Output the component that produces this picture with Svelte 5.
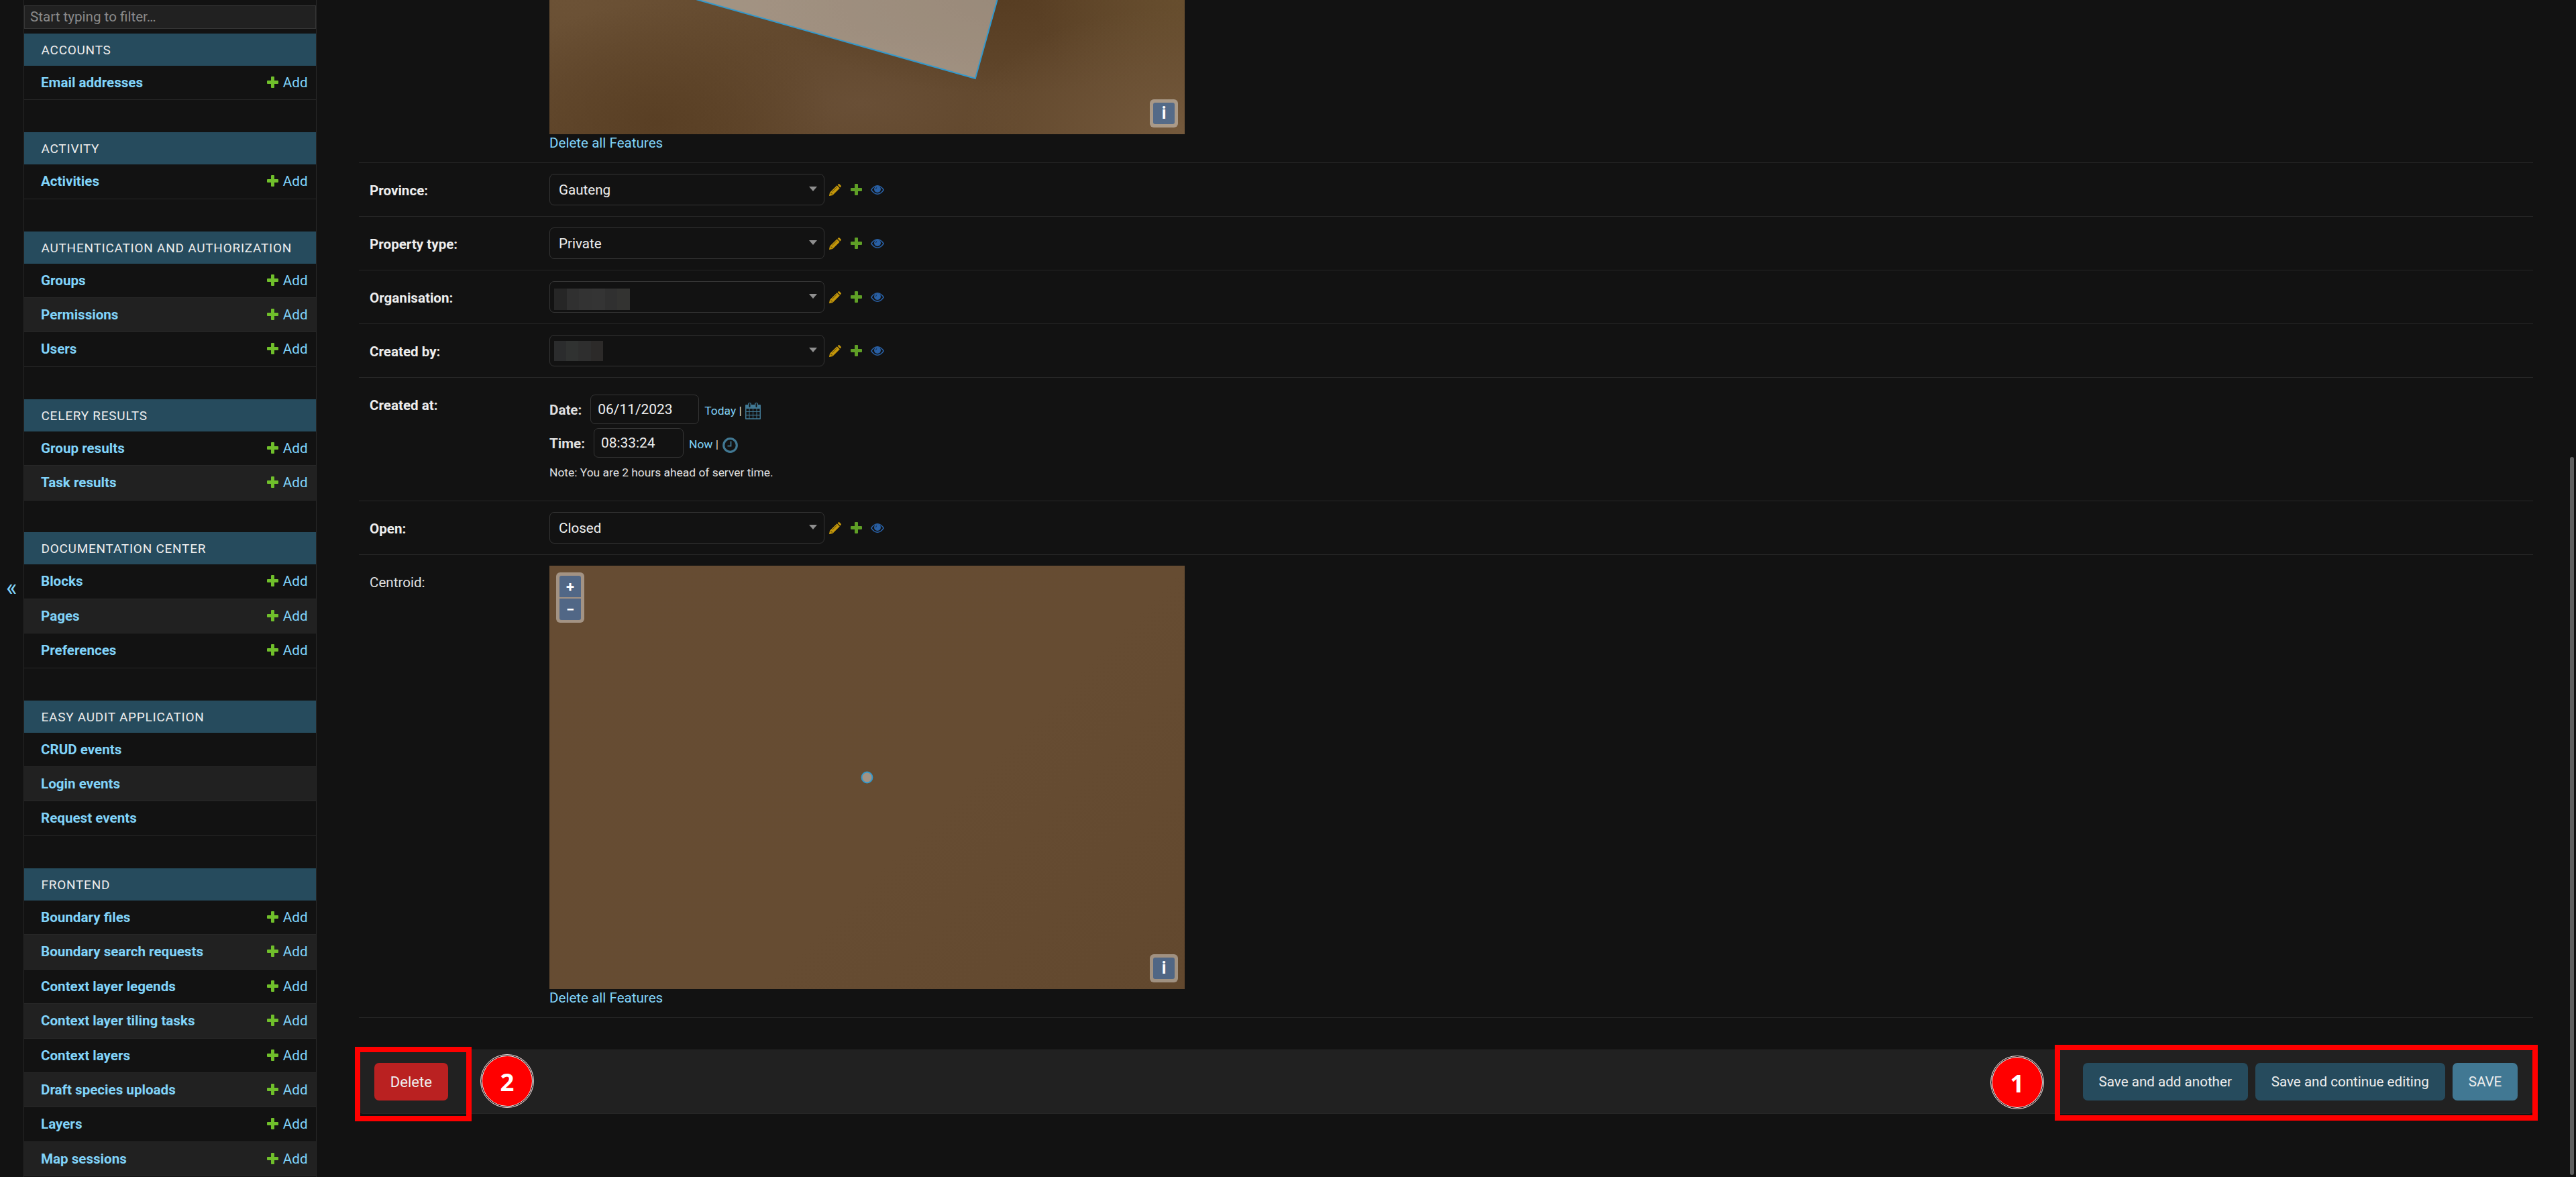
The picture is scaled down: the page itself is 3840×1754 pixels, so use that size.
<script>
  const groups = [
    { name: 'Accounts', models: ['Email addresses'] },
    { name: 'Activity', models: ['Activities'] },
    { name: 'Authentication and Authorization', models: ['Groups', 'Permissions', 'Users'] },
    { name: 'Celery Results', models: ['Group results', 'Task results'] },
    { name: 'Documentation Center', models: ['Blocks', 'Pages', 'Preferences'] },
    { name: 'Easy Audit Application', models: ['CRUD events', 'Login events', 'Request events'], readonly: true },
    {
      name: 'Frontend',
      models: [
        'Boundary files',
        'Boundary search requests',
        'Context layer legends',
        'Context layer tiling tasks',
        'Context layers',
        'Draft species uploads',
        'Layers',
        'Map sessions'
      ]
    }
  ];
</script>

{#snippet plus(cls)}
  <svg class={cls} viewBox="0 0 17 17" aria-hidden="true">
    <path d="M7 0h3q1 0 1 1v5h5q1 0 1 1v3q0 1-1 1h-5v5q0 1-1 1H7q-1 0-1-1v-5H1q-1 0-1-1V7q0-1 1-1h5V1q0-1 1-1z" />
  </svg>
{/snippet}

{#snippet related()}
  <div class="related">
    <svg class="pencil" viewBox="0 0 18 18" aria-hidden="true">
      <path d="M12.6 1.4L14 .3q.6-.5 1.200 0l2.500 2.500q.6.700 0 1.300l-1.300 1.400zM11.700 2.200l4.100 4.200L5.200 17l-5 .9q-.3 0-.2-.4L1 12.800z" />
      <path class="cut" d="M4.500 11.800l7.200-7.200M1.900 13.900l2.200.4.2 2" />
    </svg>
    {@render plus('plus')}
    <svg class="eye" viewBox="0 0 20 14" aria-hidden="true">
      <path class="lid" d="M.8 7Q5 .8 10 .8T19.200 7Q15 13.200 10 13.200T.8 7z" />
      <circle cx="10" cy="6" r="5" />
      <path class="glint" d="M7.600 6Q7.700 3.900 9.200 3.400" />
    </svg>
  </div>
{/snippet}

{#snippet selectRow(label, value, mask)}
  <div class="row">
    <div class="label strong">{label}</div>
    <div class="select">
      {#if mask}
        <span class="mask {mask}"></span>
      {:else}
        <span>{value}</span>
      {/if}
      <svg class="caret" viewBox="0 0 12 7" aria-hidden="true"><path d="M0 0h12L6 7z" /></svg>
    </div>
    {@render related()}
  </div>
{/snippet}

<div class="page">
  <div class="toggle">«</div>

  <nav>
    <div class="filter">Start typing to filter…</div>
    {#each groups as group}
      <section>
        <h2>{group.name}</h2>
        {#each group.models as model, i}
          <div class="model" class:alt={i % 2 === 1}>
            <a>{model}</a>
            {#if !group.readonly}
              <span class="add">{@render plus('addicon')}Add</span>
            {/if}
          </div>
        {/each}
      </section>
    {/each}
  </nav>

  <main>
    <div class="row first">
      <div class="label"></div>
      <div>
        <div class="map top">
          <svg class="feature" viewBox="0 0 947 200" aria-hidden="true">
            <path d="M222 0L634.800 117L667.500 0V-20H150z" />
          </svg>
          <div class="control info"><b>i</b></div>
        </div>
        <a class="clear">Delete all Features</a>
      </div>
    </div>

    {@render selectRow('Province:', 'Gauteng')}
    {@render selectRow('Property type:', 'Private')}
    {@render selectRow('Organisation:', '', 'org')}
    {@render selectRow('Created by:', '', 'user')}

    <div class="row datetime">
      <div class="label strong">Created at:</div>
      <div class="stack">
        <div class="line">
          <span class="sub">Date:</span>
          <span class="input date">06/11/2023</span>
          <span class="short"><a>Today</a>&nbsp;|</span>
          <svg class="calendar" viewBox="0 0 23 25" aria-hidden="true">
            <path fill-rule="evenodd" d="M1 3h3V2q0-2 2.500-2T9 2v1h5V2q0-2 2.500-2T19 2v1h3q1 0 1 1v20q0 1-1 1H1q-1 0-1-1V4q0-1 1-1zM5.500 2v4q0 1 1 1t1-1V2q0-1-1-1t-1 1zM15.500 2v4q0 1 1 1t1-1V2q0-1-1-1t-1 1zM1.500 9v4h4V9zM6.500 9v4h4.500V9zM12 9v4h4.500V9zM17.500 9v4h4V9zM1.500 14v4h4v-4zM6.500 14v4h4.500v-4zM12 14v4h4.500v-4zM17.500 14v4h4v-4zM1.500 19.200v4h4v-4zM6.500 19.200v4h4.500v-4zM12 19.200v4h4.500v-4zM17.500 19.200v4h4v-4z" />
          </svg>
        </div>
        <div class="line">
          <span class="sub">Time:</span>
          <span class="input time">08:33:24</span>
          <span class="short"><a>Now</a>&nbsp;|</span>
          <svg class="clock" viewBox="0 0 23 23" aria-hidden="true">
            <circle cx="11.500" cy="11.500" r="9.800" />
            <path d="M12.500 5.500v7.200H7.500" />
          </svg>
        </div>
        <p>Note: You are 2 hours ahead of server time.</p>
      </div>
    </div>

    {@render selectRow('Open:', 'Closed')}

    <div class="row centroid">
      <div class="label">Centroid:</div>
      <div>
        <div class="map bottom">
          <svg class="feature" viewBox="0 0 947 631" aria-hidden="true">
            <circle cx="473.500" cy="315.500" r="7.900" />
          </svg>
          <div class="control zoom"><b>+</b><b>−</b></div>
          <div class="control info"><b>i</b></div>
        </div>
        <a class="clear">Delete all Features</a>
      </div>
    </div>

    <div class="submit">
      <button class="delete">Delete</button>
      <span class="fill"></span>
      <button>Save and add another</button>
      <button>Save and continue editing</button>
      <button class="primary">SAVE</button>
    </div>
  </main>

  <div class="scrollbar"></div>
  <div class="frame left"></div>
  <div class="frame right"></div>
  <div class="marker two">2</div>
  <div class="marker one">1</div>
</div>

<style>
  :global(body) {
    margin: 0;
    background: #121212;
    overflow: hidden;
  }
  .page {
    position: relative;
    display: flex;
    width: 3840px;
    height: 1754px;
    overflow: hidden;
    background: #121212;
    color: #eee;
    font-family: Roboto, 'Liberation Sans', sans-serif;
    font-size: 20.6px;
    line-height: 24px;
  }
  a,
  .add {
    color: #81d4fa;
  }

  .toggle {
    width: 35px;
    box-sizing: border-box;
    padding: 860px 0 0 9px;
    font-size: 35px;
    line-height: 34px;
    color: #81d4fa;
  }

  nav {
    flex: none;
    width: 435px;
    border: solid #272727;
    border-width: 0 1px;
    padding-top: 8px;
  }
  .filter {
    box-sizing: border-box;
    height: 35px;
    margin-bottom: 7px;
    padding: 0 8px;
    border: 1px solid #353535;
    background: #212121;
    color: #8a8a8a;
    line-height: 33px;
  }
  section {
    margin-bottom: 47.850px;
  }
  h2 {
    box-sizing: border-box;
    height: 48px;
    margin: 0;
    padding-left: 25.500px;
    background: #264b5d;
    font-size: 18.940px;
    font-weight: 400;
    line-height: 49px;
    letter-spacing: 0.780px;
    text-transform: uppercase;
    color: #eee;
  }
  .model {
    box-sizing: border-box;
    display: flex;
    justify-content: space-between;
    height: 51.450px;
    padding: 0 12.500px 0 25px;
    border-bottom: 1px solid #272727;
    line-height: 51px;
  }
  .model a {
    font-weight: 700;
  }
  .alt {
    background: #212121;
  }
  .add {
    display: flex;
    align-items: center;
    gap: 6.500px;
    height: 51px;
  }
  .addicon {
    width: 17px;
    height: 17px;
    margin-top: -2px;
    fill: #70bf2b;
  }

  main {
    width: 3241px;
    margin-left: 63px;
  }
  .row {
    box-sizing: border-box;
    display: flex;
    height: 80px;
    padding-top: 16px;
    border-bottom: 1px solid #272727;
  }
  .first {
    height: 243px;
    padding-top: 0;
  }
  .label {
    width: 268px;
    padding: 13px 0 0 16px;
    color: #e0e0e0;
  }
  .strong {
    font-weight: 700;
    color: #eee;
  }
  .select {
    box-sizing: border-box;
    display: flex;
    align-items: center;
    justify-content: space-between;
    width: 410px;
    height: 47px;
    padding: 0 10px 0 13px;
    border: 1px solid #353535;
    border-radius: 7px;
  }
  .caret {
    width: 12px;
    height: 7px;
    margin-top: -2px;
    fill: #8f8f8f;
  }
  .mask {
    height: 32px;
    margin-left: -7px;
  }
  .org {
    width: 113px;
    margin-top: 7px;
    background: linear-gradient(90deg, #262626 17%, #303030 17% 33%, #333 33% 50%, #343434 50% 67%, #303030 67% 83%, #333331 83%);
  }
  .user {
    height: 30px;
    width: 73px;
    background: linear-gradient(90deg, #2b2c2d 25%, #303231 25% 50%, #2e2e2e 50% 75%, #2c2a29 75%);
  }
  .related {
    display: flex;
    align-items: center;
    height: 47px;
    margin-left: 7px;
  }
  .pencil {
    width: 18px;
    height: 18px;
    fill: #c4970a;
  }
  .cut {
    fill: none;
    stroke: #5e4a0c;
    stroke-width: 1;
  }
  .plus {
    width: 17px;
    height: 17px;
    margin: -1px 13px 0 14px;
    fill: #5f9f26;
  }
  .eye {
    width: 20px;
    height: 14px;
    fill: #2960a5;
  }
  .lid {
    fill: none;
    stroke: #2960a5;
    stroke-width: 1.500;
  }
  .glint {
    fill: none;
    stroke: #142438;
    stroke-width: 1;
  }

  .datetime {
    height: 184px;
  }
  .stack {
    padding-top: 9px;
  }
  .line {
    display: flex;
    height: 44px;
    margin-bottom: 6px;
  }
  .sub {
    padding-top: 11px;
    font-weight: 700;
    color: #e0e0e0;
  }
  .input {
    box-sizing: border-box;
    height: 44px;
    padding-left: 10px;
    border: 1px solid #353535;
    border-radius: 7px;
    font-size: 20.900px;
    line-height: 42px;
  }
  .date {
    width: 162px;
    margin-left: 13px;
  }
  .time {
    width: 134px;
    margin-left: 13px;
  }
  .short {
    padding-top: 12px;
    margin-left: 8px;
    font-size: 17.400px;
    color: #ddd;
  }
  .calendar {
    width: 23px;
    height: 25px;
    margin: 12px 0 0 5px;
    fill: #417893;
  }
  .clock {
    width: 23px;
    height: 23px;
    margin: 14px 0 0 6px;
    fill: none;
    stroke: #417893;
    stroke-width: 3.200;
  }
  .clock path {
    stroke-width: 1.800;
  }
  p {
    margin: 10px 0 0;
    font-size: 17.400px;
    color: #e0e0e0;
  }

  .map {
    position: relative;
    width: 947px;
    overflow: hidden;
  }
  .top {
    height: 200px;
    background:
      radial-gradient(ellipse 330px 190px at 100% 100%, #74593c 0%, #74593c00 100%),
      radial-gradient(ellipse 220px 180px at 100% 0%, #674e2e 0%, #674e2e00 100%),
      radial-gradient(ellipse 260px 180px at 17% 92%, #593f24 0%, #593f2400 100%),
      radial-gradient(ellipse 330px 140px at 71% 0%, #573d22 0%, #573d2200 100%),
      radial-gradient(ellipse 250px 110px at 49% 77%, #694f36 0%, #694f3600 100%),
      radial-gradient(ellipse 400px 240px at 3% 0%, #6c5236 0%, #6c523600 100%),
      #61472c;
  }
  .bottom {
    height: 631px;
    background: linear-gradient(135deg, #664c33 0%, #664c32 60%, #62482e 100%);
  }
  .feature {
    position: absolute;
    inset: 0;
    width: 100%;
    height: 100%;
    fill: rgba(255, 255, 255, 0.4);
    stroke: #39c;
    stroke-width: 2;
  }
  .control {
    position: absolute;
    display: grid;
    gap: 2px;
    padding: 5px;
    border-radius: 6px;
    background: rgba(255, 255, 255, 0.4);
  }
  .control b {
    width: 32px;
    height: 32px;
    background: rgba(0, 60, 136, 0.5);
    color: #fff;
    font-size: 22px;
    line-height: 34px;
    text-align: center;
  }
  .info {
    right: 10px;
    bottom: 10px;
  }
  .info b {
    border-radius: 3px;
    font-size: 25px;
    line-height: 31px;
  }
  .zoom {
    left: 10px;
    top: 10px;
    padding-bottom: 4px;
  }
  .zoom b:first-child {
    border-radius: 3px 3px 0 0;
  }
  .zoom b:last-child {
    border-radius: 0 0 3px 3px;
  }
  .clear {
    display: block;
    margin-top: 1px;
  }
  .centroid {
    height: 690px;
  }

  .submit {
    box-sizing: border-box;
    display: flex;
    align-items: center;
    gap: 11.500px;
    height: 96px;
    margin-top: 47px;
    padding: 0 22px;
    border: 1px solid #272727;
    border-radius: 6px;
    background: #212121;
  }
  .fill {
    flex: 1;
  }
  button {
    height: 56px;
    padding: 0 23.700px;
    border: 0;
    border-radius: 7px;
    background: #264b5d;
    color: #eee;
    font: inherit;
  }
  .primary {
    background: #417893;
  }
  .delete {
    background: #ba2121;
    font-size: 22.100px;
  }

  .scrollbar {
    position: absolute;
    left: 3831px;
    top: 681px;
    width: 6px;
    height: 1070px;
    border-radius: 3px;
    background: #5f5f5f;
  }
  .frame {
    position: absolute;
    box-sizing: border-box;
    border: 8px solid #f00;
  }
  .left {
    left: 529px;
    top: 1560px;
    width: 174px;
    height: 111px;
  }
  .right {
    left: 3063px;
    top: 1557px;
    width: 720px;
    height: 113px;
  }
  .marker {
    position: absolute;
    box-sizing: border-box;
    width: 80px;
    height: 80px;
    border: 1px solid #ddd;
    border-radius: 50%;
    box-shadow: inset 0 0 0 1px #111, inset 0 0 0 2px #eee;
    background: #f00;
    color: #fff;
    font: 700 36.500px/80px 'Open Sans', sans-serif;
    text-align: center;
  }
  .two {
    left: 716px;
    top: 1571px;
  }
  .one {
    left: 2967px;
    top: 1573px;
  }
</style>
